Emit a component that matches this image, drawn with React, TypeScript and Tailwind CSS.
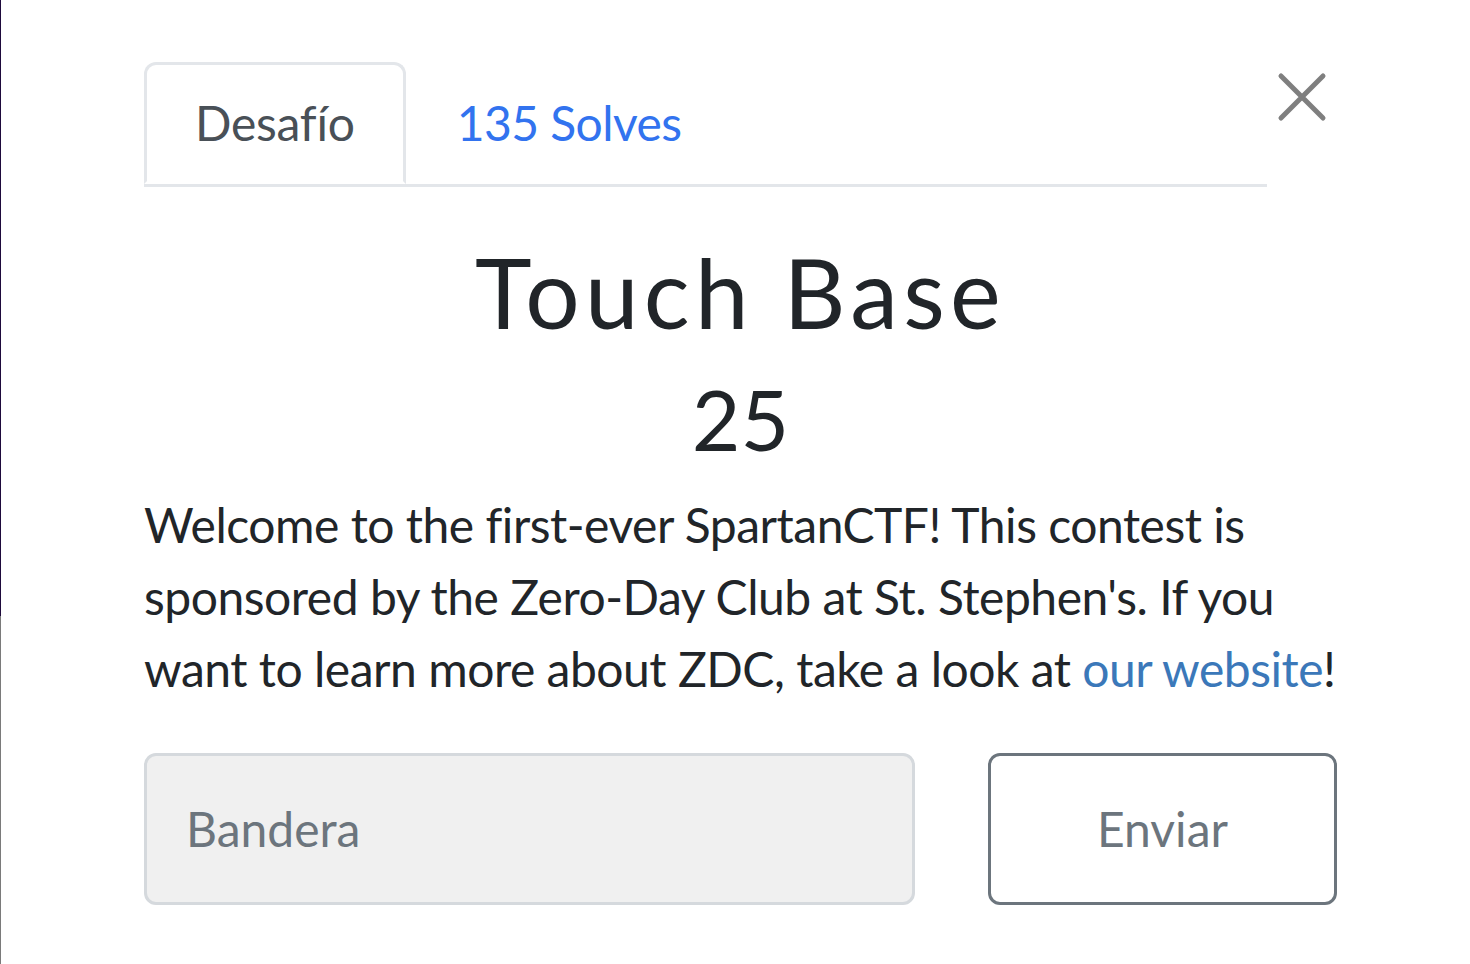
import React from "react";

function CloseIcon() {
  return (
    <svg width="50" height="50" viewBox="0 0 50 50" fill="none">
      <path
        d="M4 4 L46 46 M46 4 L4 46"
        stroke="#7f7f7f"
        strokeWidth="5"
        strokeLinecap="round"
      />
    </svg>
  );
}

export default function App() {
  return (
    <div className="flex h-[964px] w-[1470px] overflow-hidden bg-white font-['Lato','Noto_Sans',sans-serif] text-[#212529]">
      {/* backdrop edge */}
      <div className="flex w-px flex-col">
        <div className="h-[616px] bg-[#1e0a3c]" />
        <div className="flex-1 bg-[#7a7a7a]" />
      </div>

      <div className="w-[1193px] shrink-0 pl-[143px] pt-[62px] box-content">
        <div className="flex">
          <ul className="flex flex-1 border-b-[3px] border-[#e3e6ea]">
            <li className="-mb-[3px]">
              <span className="block rounded-t-[12px] border-[3px] border-[#e3e6ea] border-b-white bg-white px-[48px] py-[22px] text-[48px] leading-[72px] tracking-[-0.005em] text-[#495057]">
                Desafío
              </span>
            </li>
            <li>
              <span className="block border-[3px] border-transparent px-[48px] py-[22px] text-[48px] leading-[72px] tracking-[-0.012em] text-[#3273ef]">
                135 Solves
              </span>
            </li>
          </ul>
          <button className="flex w-[70px] justify-center pt-[10px]">
            <CloseIcon />
          </button>
        </div>

        <h2 className="mt-[47px] text-center text-[96px] font-normal leading-[1.2] tracking-[0.055em]">
          Touch Base
        </h2>
        <h3 className="mt-[20px] text-center text-[84px] font-normal leading-[1.2]">
          25
        </h3>

        <p className="mt-[19px] text-[48px] leading-[72px] tracking-[-0.01em]">
          Welcome to the first-ever SpartanCTF! This contest is sponsored by the
          Zero-Day Club at St. Stephen's. If you want to learn more about ZDC,
          take a look at <span className="text-[#3b78b9]">our website</span>!
        </p>

        <div className="mt-[48px] flex justify-between">
          <div className="flex h-[152px] w-[771px] items-center rounded-[12px] border-[3px] border-[#d5d9dd] bg-[#f0f0f0] pl-[39px] text-[48px] text-[#6c757d]">
            Bandera
          </div>
          <div className="flex h-[152px] w-[349px] items-center justify-center rounded-[12px] border-[3px] border-[#6c757d] text-[48px] text-[#6c757d]">
            Enviar
          </div>
        </div>
      </div>
    </div>
  );
}
